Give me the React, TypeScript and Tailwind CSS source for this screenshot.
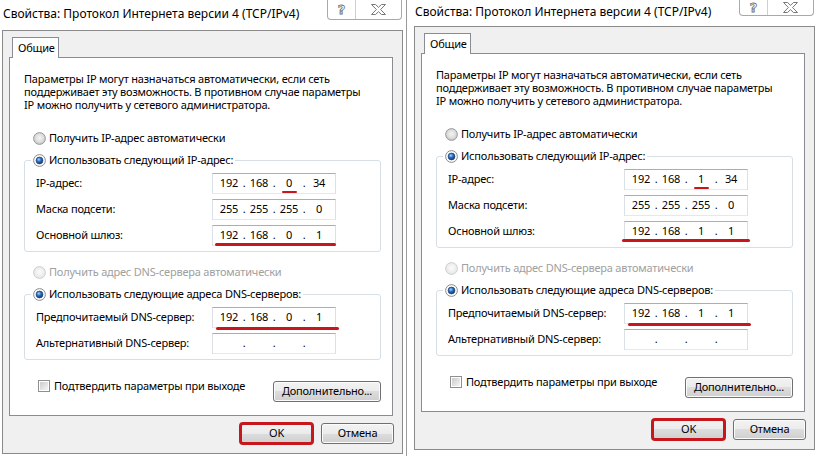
import React from "react";

function Radio({ checked = false, disabled = false }: { checked?: boolean; disabled?: boolean }) {
  return (
    <svg width="13" height="13" viewBox="0 0 13 13" className="shrink-0">
      <defs>
        <radialGradient id="rbFill" cx="50%" cy="45%" r="60%">
          <stop offset="0%" stopColor="#f4f4f4" />
          <stop offset="55%" stopColor="#dedede" />
          <stop offset="100%" stopColor="#bcbcbc" />
        </radialGradient>
        <radialGradient id="rbFillD" cx="50%" cy="45%" r="60%">
          <stop offset="0%" stopColor="#fbfbfb" />
          <stop offset="100%" stopColor="#e4e4e4" />
        </radialGradient>
        <radialGradient id="rbDot" cx="40%" cy="35%" r="70%">
          <stop offset="0%" stopColor="#a8d6ff" />
          <stop offset="45%" stopColor="#2e6fbf" />
          <stop offset="100%" stopColor="#0c2f66" />
        </radialGradient>
      </defs>
      {checked ? (
        <>
          <circle cx="6.5" cy="6.5" r="5.9" fill="#fafafa" stroke="#8b8d8f" strokeWidth="1" />
          <circle cx="6.5" cy="6.5" r="3.4" fill="url(#rbDot)" stroke="#1d4076" strokeWidth="0.7" />
        </>
      ) : (
        <circle
          cx="6.5"
          cy="6.5"
          r="5.9"
          fill={disabled ? "url(#rbFillD)" : "url(#rbFill)"}
          stroke={disabled ? "#cfcfcf" : "#9a9c9e"}
          strokeWidth="1"
        />
      )}
    </svg>
  );
}

function Checkbox() {
  return (
    <span className="flex h-[12px] w-[12px] shrink-0 items-center justify-center border border-[#8e8f8f] bg-white">
      <span className="h-[8px] w-[8px] bg-[linear-gradient(135deg,#cbcbcb,#f5f5f5)]" />
    </span>
  );
}

function WinButton({ children, className }: { children: React.ReactNode; className: string }) {
  return (
    <div
      className={
        "flex shrink-0 items-center justify-center rounded-[3px] border border-[#707070] bg-[linear-gradient(#f3f3f3,#ebebeb_50%,#dddddd_50%,#cfcfcf)] text-black shadow-[inset_0_0_0_1px_#fbfbfb] " +
        className
      }
    >
      {children}
    </div>
  );
}

function IpBox({
  v,
  markSeg,
  underline,
}: {
  v: string[];
  markSeg?: number;
  underline?: React.ReactNode;
}) {
  return (
    <div className="relative flex h-[21px] w-[124px] shrink-0 items-stretch border border-[#abadb3] border-x-[#dbdfe6] border-b-[#e3e9ef] bg-white pl-[4px] text-black">
      {v.map((s, i) => (
        <React.Fragment key={i}>
          {i > 0 && <span className="flex w-[6px] items-center justify-center">.</span>}
          <span className="relative flex w-[24px] items-center justify-center">
            {s}
            {markSeg === i && (
              <span className="absolute bottom-[0px] left-[5px] right-[4px] h-[2px] rounded-full bg-[#c8161d]" />
            )}
          </span>
        </React.Fragment>
      ))}
      {underline}
    </div>
  );
}

function Row({ label, children }: { label: string; children: React.ReactNode }) {
  return (
    <div className="flex items-center pl-[11px] pr-[44px]">
      <span className="flex-1">{label}</span>
      {children}
    </div>
  );
}

function TitleButtons({ right }: { right: boolean }) {
  return (
    <div
      className={
        right
          ? "ml-auto mr-[3px] flex h-[16px] w-[75px] shrink-0 rounded-b-[4px] border border-t-0 border-[#a9a9a9] bg-white"
          : "ml-auto mr-[3px] flex h-[20px] w-[75px] shrink-0 rounded-b-[4px] border border-t-0 border-[#a9a9a9] bg-white"
      }
    >
      <div className="flex w-[28px] items-center justify-center border-r border-[#cfcfcf]">
        <span className="font-['DejaVu_Sans',sans-serif] text-[13px] font-bold leading-none tracking-normal text-white [-webkit-text-stroke:0.8px_#6f6f6f]">
          ?
        </span>
      </div>
      <div className="flex flex-1 items-center justify-center">
        <svg width="15" height="11" viewBox="0 0 15 11">
          <path
            d="M0.5 0.5 H4.5 L7.5 3.3 L10.5 0.5 H14.5 L9.6 5.5 L14.5 10.5 H10.5 L7.5 7.7 L4.5 10.5 H0.5 L5.4 5.5 Z"
            fill="#ffffff"
            stroke="#777777"
            strokeWidth="1"
            strokeLinejoin="round"
          />
        </svg>
      </div>
    </div>
  );
}

function Dialog({ right = false }: { right?: boolean }) {
  const ip = right ? ["192", "168", "1", "34"] : ["192", "168", "0", "34"];
  const gw = right ? ["192", "168", "1", "1"] : ["192", "168", "0", "1"];
  const dns = gw;
  return (
    <div className="w-[405px]">
      <div className={right ? "flex h-[26px] items-start" : "flex h-[30px] items-start"}>
        <div className={right ? "pl-[3px] pt-[3px] text-[12px] leading-[18px] tracking-normal" : "pl-[3px] pt-[5px] text-[12px] leading-[18px] tracking-normal"}>
          Свойства: Протокол Интернета версии 4 (TCP/IPv4)
        </div>
        <TitleButtons right={right} />
      </div>
      <div className="ml-[2px] flex h-[424px] w-[401px] flex-col border border-[#8a8a8a] bg-[#f0f0f0]">
        <div className="relative z-10 -mb-px ml-[9px] mt-[6px] flex h-[21px] w-[47px] items-center border border-b-0 border-[#898c95] bg-white pl-[5px]">
          Общие
        </div>
        <div className="ml-[6px] flex h-[359px] w-[384px] flex-col border border-[#898c95] bg-white">
          <div className="pl-[14px] pt-[14px] leading-[13px]">
            Параметры IP могут назначаться автоматически, если сеть
            <br />
            поддерживает эту возможность. В противном случае параметры
            <br />
            IP можно получить у сетевого администратора.
          </div>

          <div className="ml-[23px] mt-[19px] flex h-[16px] items-center gap-[3px]">
            <Radio />
            <span>Получить IP-адрес автоматически</span>
          </div>

          <fieldset className="ml-[14px] mt-[6px] w-[357px] rounded-[3px] border border-[#d5dfe5] px-0 pb-[5px] pt-[5px]">
            <legend className="ml-[6px] px-[2px]">
              <div className="flex h-[16px] items-center gap-[3px]">
                <Radio checked />
                <span>Использовать следующий IP-адрес:</span>
              </div>
            </legend>
            <div className="flex flex-col gap-[5px]">
              <Row label="IP-адрес:">
                <IpBox v={ip} markSeg={2} />
              </Row>
              <Row label="Маска подсети:">
                <IpBox v={["255", "255", "255", "0"]} />
              </Row>
              <Row label="Основной шлюз:">
                <IpBox
                  v={gw}
                  underline={
                    right ? (
                      <span className="absolute bottom-[-1px] left-[-3px] right-[-3px] h-[3px] rounded-full bg-[#c8161d]" />
                    ) : (
                      <span className="absolute bottom-[-1px] left-[2px] right-[-1px] h-[3px] rounded-full bg-[#c8161d]" />
                    )
                  }
                />
              </Row>
            </div>
          </fieldset>

          <div className="ml-[23px] mt-[12px] flex h-[16px] items-center gap-[3px] text-[#a0a0a0]">
            <Radio disabled />
            <span>Получить адрес DNS-сервера автоматически</span>
          </div>

          <fieldset className="ml-[14px] mt-[6px] w-[357px] rounded-[3px] border border-[#d5dfe5] px-0 pb-[5px] pt-[5px]">
            <legend className="ml-[6px] px-[2px]">
              <div className="flex h-[16px] items-center gap-[3px]">
                <Radio checked />
                <span>Использовать следующие адреса DNS-серверов:</span>
              </div>
            </legend>
            <div className="flex flex-col gap-[5px]">
              <Row label="Предпочитаемый DNS-сервер:">
                <IpBox
                  v={dns}
                  underline={
                    <span className="absolute bottom-[-3px] left-[3px] right-[-4px] h-[3px] rounded-full bg-[#c8161d]" />
                  }
                />
              </Row>
              <Row label="Альтернативный DNS-сервер:">
                <IpBox v={["", "", "", ""]} />
              </Row>
            </div>
          </fieldset>

          <div className="mt-[18px] flex items-start justify-between">
            <div className="ml-[28px] flex h-[16px] items-center gap-[4px]">
              <Checkbox />
              <span>Подтвердить параметры при выходе</span>
            </div>
            <WinButton className="mr-[11px] mt-[3px] h-[21px] w-[108px]">Дополнительно...</WinButton>
          </div>
        </div>

        <div className="mt-[7px] flex items-start justify-end gap-[8px] pr-[8px]">
          <WinButton className="h-[21px] w-[73px] outline-[3px] outline-offset-[-2px] outline-[#c8161d]">OK</WinButton>
          <WinButton className="h-[21px] w-[73px]">Отмена</WinButton>
        </div>
      </div>
    </div>
  );
}

export default function App() {
  return (
    <div className="flex h-[456px] w-[820px] overflow-hidden whitespace-nowrap bg-white font-['Noto_Sans',sans-serif] text-[11px] tracking-[-0.2px] text-black">
      <div className="w-[406px] shrink-0">
        <Dialog />
      </div>
      <div className="w-px shrink-0 bg-[#9a9a9a]" />
      <div className="w-[413px] shrink-0 pl-[5px]">
        <Dialog right />
      </div>
    </div>
  );
}
